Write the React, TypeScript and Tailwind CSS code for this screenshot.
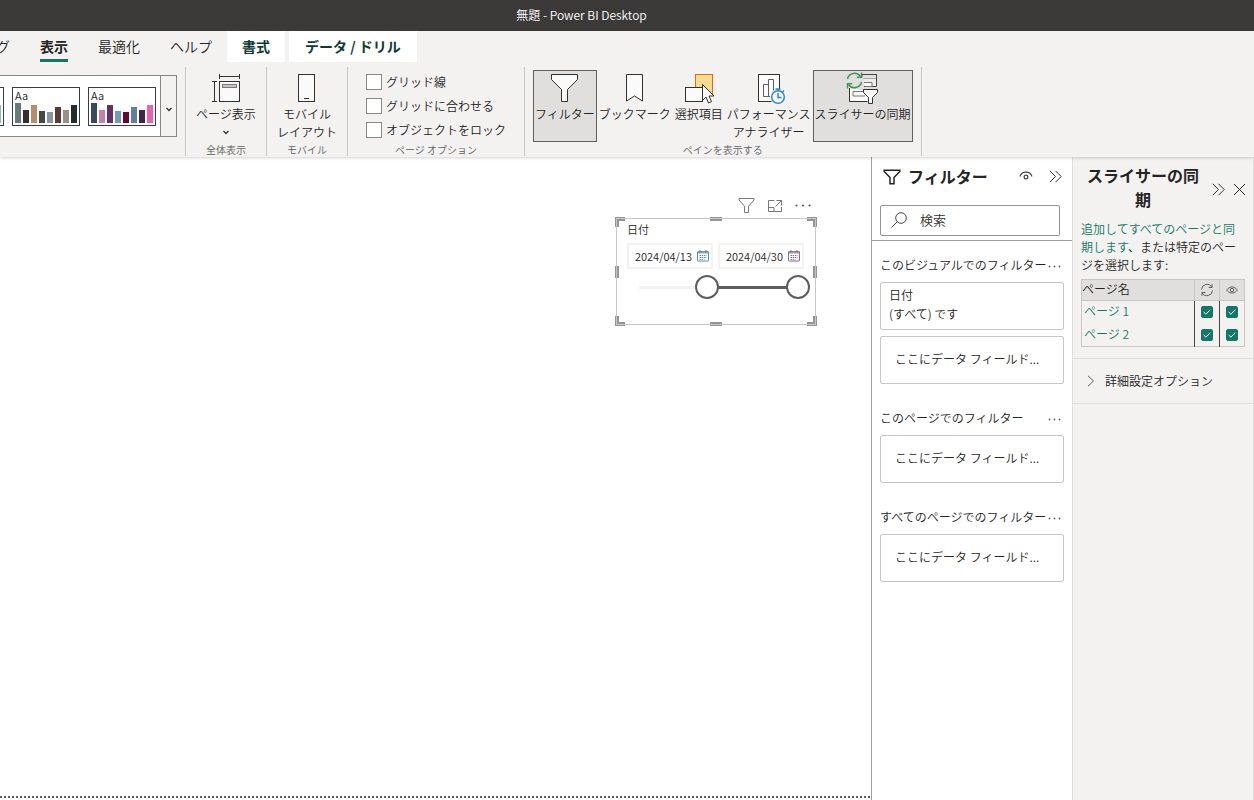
import { useState } from 'react';
import type { ReactNode } from 'react';

interface ThemeBar {
    height: number;
    color: string;
}

const themes: { name: string; bars: ThemeBar[] }[] = [
    {
        name: 'theme-1',
        bars: [20, 13, 18, 12, 11, 16, 13, 18].map(height => ({ height, color: '#86c098' })),
    },
    {
        name: 'theme-2',
        bars: [
            { height: 20, color: '#687b7b' },
            { height: 13, color: '#3a2e30' },
            { height: 18, color: '#b38f70' },
            { height: 12, color: '#434b49' },
            { height: 11, color: '#86979b' },
            { height: 16, color: '#5a3b36' },
            { height: 13, color: '#97928c' },
            { height: 18, color: '#262c2d' },
        ],
    },
    {
        name: 'theme-3',
        bars: [
            { height: 20, color: '#3a4a5b' },
            { height: 13, color: '#c381ab' },
            { height: 18, color: '#663067' },
            { height: 12, color: '#709bbd' },
            { height: 11, color: '#690534' },
            { height: 16, color: '#5f80a0' },
            { height: 13, color: '#41254a' },
            { height: 18, color: '#ee5fac' },
        ],
    },
];

const filterSections = [
    { title: 'このビジュアルでのフィルター', fields: [{ name: '日付', condition: '(すべて) です' }] },
    { title: 'このページでのフィルター', fields: [] },
    { title: 'すべてのページでのフィルター', fields: [] },
];

/* Icons */

function PageViewIcon() {
    return (
        <svg width="30" height="30" viewBox="0 0 30 30" fill="none" stroke="#323130">
            <path d="M8.500 1v5M28.500 1v5M8.500 3.500h20M1 8.500h5M1 28.500h5M3.500 8.500v20" />
            <rect x="8.500" y="8.500" width="20" height="20" fill="#fafafa" />
            <rect x="11.500" y="11.500" width="14" height="3" fill="#c8c6c4" stroke="#797775" />
        </svg>
    );
}

function PhoneIcon() {
    return (
        <svg width="18" height="30" viewBox="0 0 18 30" fill="#fafafa" stroke="#323130">
            <rect x=".5" y="1.500" width="16" height="27" />
            <path d="M6 25.500h5" />
        </svg>
    );
}

function RibbonFunnelIcon() {
    return (
        <svg width="30" height="30" viewBox="0 0 30 30" fill="#fafafa" stroke="#323130">
            <path d="M1.500 1.500h26v5l-10 10v12h-6v-12l-10-10z" />
        </svg>
    );
}

function BookmarkIcon() {
    return (
        <svg width="18" height="30" viewBox="0 0 18 30" fill="#fafafa" stroke="#323130">
            <path d="M.5 1.500h16v26.500l-8-5-8 5z" />
        </svg>
    );
}

function SelectionIcon() {
    return (
        <svg width="30" height="32" viewBox="0 0 30 32" fill="#fafafa">
            <rect x="11.500" y="2.500" width="17" height="19" fill="#f8db8f" stroke="#dc6a13" />
            <rect x="1.500" y="15.500" width="17" height="14" stroke="#323130" />
            <path d="M18.500 12.500v16l3.500-3.500 2.500 6 3-1.300-2.500-5.700h5z" stroke="#323130" />
        </svg>
    );
}

function PerformanceIcon() {
    return (
        <svg width="34" height="34" viewBox="0 0 34 34" fill="none">
            <rect x="6.500" y="3.500" width="21" height="27" fill="#fafafa" stroke="#323130" />
            <path d="M11.500 25.500v-12h5v12zM16.500 25.500v-17h5v17z" stroke="#605e5c" />
            <circle cx="26" cy="26" r="8" fill="#f3f2f1" />
            <circle cx="26" cy="26" r="6.300" fill="#fafafa" stroke="#2b88d8" strokeWidth="1.500" />
            <path d="M26 22v4.500h3.500M26 19.500v-2M23.500 18h5M30.500 21l1.500-1.500" stroke="#2b88d8" strokeWidth="1.500" />
        </svg>
    );
}

function SlicerSyncIcon() {
    return (
        <svg width="34" height="34" viewBox="0 0 34 34" fill="none">
            <rect x="16.500" y="3.500" width="14" height="4" fill="#c8c6c4" stroke="#605e5c" />
            <path d="M16 3.500h14.500v12H18" fill="#fafafa" fillOpacity=".5" stroke="#484644" />
            <path d="M18 11.500h8v4h-7" fill="#fafafa" stroke="#797775" />
            <path d="M3.500 17.500v13h21v-11h-4" fill="#fafafa" />
            <path d="M3.500 17v13.500h18" stroke="#323130" />
            <path d="M19 20.500h-12v4.500h12" stroke="#797775" />
            <path d="M17.500 18.500h14v3l-5 5v6h-4v-6l-5-5z" fill="#fafafa" stroke="#323130" />
            <circle cx="8.500" cy="9.500" r="9" fill="#e1dfdd" />
            <path d="M1.500 8a7.200 7.200 0 0 1 13-2.500M15.500 11a7.200 7.200 0 0 1-13 2.500" stroke="#3a9650" strokeWidth="1.400" />
            <path d="M15.500 1.500v4.700h-4.700M1.500 17.500v-4.700h4.700" stroke="#3a9650" strokeWidth="1.400" />
        </svg>
    );
}

function ChevronDown() {
    return (
        <svg width="8" height="5" viewBox="0 0 8 5" fill="none" stroke="#323130" strokeWidth="1.300">
            <path d="M1.500 1l2.500 2.500 2.500-2.500" />
        </svg>
    );
}

function DoubleChevron() {
    return (
        <svg width="13" height="13" viewBox="0 0 13 13" fill="none" stroke="#323130">
            <path d="M.8.8l5.700 5.700-5.700 5.700M6.500.8l5.700 5.700-5.700 5.700" />
        </svg>
    );
}

function CalendarIcon({ color }: { color: string }) {
    return (
        <svg width="12" height="12" viewBox="0 0 12 12" fill="none">
            <rect x=".5" y="1.500" width="11" height="9.500" rx=".5" fill="#fff" stroke={color} />
            <path d="M1 2.500h10" stroke="#a19f9d" strokeWidth="2" />
            <path d="M3 0v2.500M9 0v2.500" stroke="#797775" />
            <path d="M2.500 5.500h7M2.500 7.500h7M2.500 9.300h5" stroke={color} strokeDasharray="1.500 .7" />
        </svg>
    );
}

/* Ribbon */

function RibbonButton({ icon, lines, active = false, chevron = false }: {
    icon: ReactNode;
    lines: string[];
    active?: boolean;
    chevron?: boolean;
}) {
    return (
        <button
            type="button"
            className={`flex h-[72px] shrink-0 flex-col items-center border px-px text-xs leading-[18px] whitespace-nowrap ${
                active ? 'border-[#605e5c] bg-[#e1dfdd]' : 'border-transparent hover:bg-[#e1dfdd]'
            }`}
        >
            <span className="flex h-[34px] shrink-0 items-center">{icon}</span>
            {lines.map(line => <span key={line}>{line}</span>)}
            {chevron && <span className="flex h-[18px] items-center"><ChevronDown /></span>}
        </button>
    );
}

function RibbonGroup({ label, className, children }: { label: string; className: string; children: ReactNode }) {
    return (
        <div className={`mt-[5px] flex h-[89px] shrink-0 flex-col items-center border-r border-[#c8c6c4] pt-[3px] ${className}`}>
            <div className="flex h-[72px] shrink-0">{children}</div>
            <div className="text-[10px] leading-4 text-[#605e5c]">{label}</div>
        </div>
    );
}

function ThemeGallery() {
    return (
        <div className="mt-[5px] flex h-[89px] w-[186px] shrink-0 justify-end overflow-hidden border-r border-[#c8c6c4] pt-2 pr-2">
            <div className="flex h-[62px] shrink-0 border border-[#8a8886] bg-white">
                <div className="flex items-center gap-2 pr-1 pl-2">
                    {themes.map(theme => (
                        <button
                            key={theme.name}
                            type="button"
                            aria-label={theme.name}
                            className="flex h-[39px] w-[68px] flex-col justify-between border border-[#3b3a45] bg-white px-0.5 pb-[3px] text-left"
                        >
                            <span className="text-[11px] leading-[15px]">Aa</span>
                            <span className="flex items-end gap-0.5">
                                {theme.bars.map((bar, i) => (
                                    <span key={i} className="w-1.5" style={{ height: bar.height, background: bar.color }} />
                                ))}
                            </span>
                        </button>
                    ))}
                </div>
                <button type="button" aria-label="▾" className="flex w-4 items-center justify-center border-l border-[#8a8886] bg-[#f3f2f1] pt-1.5">
                    <ChevronDown />
                </button>
            </div>
        </div>
    );
}

function PageOption({ label }: { label: string }) {
    return (
        <label className="flex h-4 items-center gap-1 text-xs">
            <input type="checkbox" className="size-4 appearance-none border border-[#8a8886] bg-white checked:bg-[#117865]" />
            {label}
        </label>
    );
}

function Ribbon() {
    const tab = 'h-[31px] shrink-0 px-[15px] pb-0.5 text-sm whitespace-nowrap';
    return (
        <header className="relative z-10 bg-[#f3f2f1] shadow-[0_1px_3px_rgba(0,0,0,0.18)]">
            <nav className="flex h-[31px] overflow-hidden">
                <button type="button" className="-ml-1 shrink-0 pr-[15px] pb-0.5 text-sm">グ</button>
                <button type="button" className="flex h-[31px] shrink-0 items-stretch px-[15px] text-sm font-bold">
                    <span className="flex items-center border-b-3 border-[#117865] pt-px">表示</span>
                </button>
                <button type="button" className={tab}>最適化</button>
                <button type="button" className={tab}>ヘルプ</button>
                <button type="button" className={`${tab} bg-white font-bold text-[#0c3b33]`}>書式</button>
                <button type="button" className="ml-1 h-[31px] shrink-0 bg-white px-4 pb-0.5 text-sm font-bold whitespace-nowrap text-[#0c3b33]">
                    データ / ドリル
                </button>
            </nav>
            <div className="flex h-[95px] overflow-hidden">
                <ThemeGallery />
                <RibbonGroup label="全体表示" className="w-[81px]">
                    <RibbonButton icon={<PageViewIcon />} lines={['ページ表示']} chevron />
                </RibbonGroup>
                <RibbonGroup label="モバイル" className="w-[81px]">
                    <RibbonButton icon={<PhoneIcon />} lines={['モバイル', 'レイアウト']} />
                </RibbonGroup>
                <RibbonGroup label="ページ オプション" className="w-[177px]">
                    <div className="flex flex-col gap-2 pt-1">
                        <PageOption label="グリッド線" />
                        <PageOption label="グリッドに合わせる" />
                        <PageOption label="オブジェクトをロック" />
                    </div>
                </RibbonGroup>
                <RibbonGroup label="ペインを表示する" className="px-2">
                    <RibbonButton icon={<RibbonFunnelIcon />} lines={['フィルター']} active />
                    <RibbonButton icon={<BookmarkIcon />} lines={['ブックマーク']} />
                    <RibbonButton icon={<SelectionIcon />} lines={['選択項目']} />
                    <RibbonButton icon={<PerformanceIcon />} lines={['パフォーマンス', 'アナライザー']} />
                    <RibbonButton icon={<SlicerSyncIcon />} lines={['スライサーの同期']} active />
                </RibbonGroup>
            </div>
        </header>
    );
}

/* Report canvas */

function DateField({ value, onChange, label, color }: {
    value: string;
    onChange: (value: string) => void;
    label: string;
    color: string;
}) {
    return (
        <div className="flex h-[26px] w-[86px] items-center border-2 border-[#f3f2f1] bg-white pl-1.5">
            <input
                type="text"
                aria-label={label}
                value={value}
                onChange={e => onChange(e.target.value)}
                className="w-[62px] shrink-0 bg-transparent text-[11px] outline-none"
            />
            <CalendarIcon color={color} />
        </div>
    );
}

const thumb =
    'pointer-events-none absolute inset-0 h-6 w-full appearance-none bg-transparent [&::-webkit-slider-thumb]:pointer-events-auto [&::-webkit-slider-thumb]:size-6 [&::-webkit-slider-thumb]:appearance-none [&::-webkit-slider-thumb]:rounded-full [&::-webkit-slider-thumb]:border-2 [&::-webkit-slider-thumb]:border-[#605e5c] [&::-webkit-slider-thumb]:bg-white';

const handles = [
    '-top-px -left-px size-2.5 border-t-4 border-l-4',
    '-top-px -right-px size-2.5 border-t-4 border-r-4',
    '-bottom-px -left-px size-2.5 border-b-4 border-l-4',
    '-right-px -bottom-px size-2.5 border-r-4 border-b-4',
    '-top-px left-[94px] h-1 w-3 bg-[#979593]',
    '-bottom-px left-[94px] h-1 w-3 bg-[#979593]',
    'top-12 -left-px h-3 w-1 bg-[#979593]',
    'top-12 -right-px h-3 w-1 bg-[#979593]',
];

function DateSlicer() {
    const [start, setStart] = useState('2024/04/13');
    const [end, setEnd] = useState('2024/04/30');
    const [range, setRange] = useState([43, 100]);

    return (
        <section className="absolute top-10 right-[55px] w-[200px]">
            <div className="flex h-[21px] items-start justify-end gap-3 pr-[5px]">
                <button type="button" aria-label="フィルター">
                    <svg width="17" height="17" viewBox="0 0 17 17" fill="none" stroke="#797775">
                        <path d="M1 1.500h15v1.500l-5.500 6.200v6.300h-4v-6.300l-5.500-6.200z" />
                    </svg>
                </button>
                <button type="button" aria-label="フォーカス モード">
                    <svg width="16" height="17" viewBox="0 0 16 17" fill="none" stroke="#797775">
                        <path d="M7.500 3.500h-6v11h13v-4.500M1.500 10.500h5.500v4M9.500 3.500h5v5M14.500 3.500l-6 6" />
                    </svg>
                </button>
                <button type="button" aria-label="その他" className="flex h-[17px] items-center">
                    <svg width="16" height="3" viewBox="0 0 16 3" fill="#605e5c">
                        <circle cx="1.500" cy="1.500" r="1.100" />
                        <circle cx="8" cy="1.500" r="1.100" />
                        <circle cx="14.500" cy="1.500" r="1.100" />
                    </svg>
                </button>
            </div>
            <div className="relative h-[107px] bg-white px-[11px] pt-px">
                {handles.map(position => (
                    <span key={position} className={`absolute border-[#979593] ${position}`} />
                ))}
                <div className="pointer-events-none absolute inset-0 border border-[#c8c6c4]" />
                <div className="pt-px text-[11px] leading-[18px]">日付</div>
                <div className="mt-[5px] flex gap-[5px]">
                    <DateField label="開始日" value={start} onChange={setStart} color="#4a90c8" />
                    <DateField label="終了日" value={end} onChange={setEnd} color="#8a6a86" />
                </div>
                <div className="relative mt-1.5 h-6 w-[183px]">
                    <div className="absolute top-[11px] right-3 left-3 h-[3px] bg-[#f3f2f1]" />
                    <div
                        className="absolute top-[11px] h-[3px] bg-[#605e5c]"
                        style={{ left: 12 + range[0] * 1.59, right: 12 + (100 - range[1]) * 1.59 }}
                    />
                    <input
                        type="range"
                        aria-label="開始"
                        className={thumb}
                        value={range[0]}
                        onChange={e => setRange([Math.min(+e.target.value, range[1]), range[1]])}
                    />
                    <input
                        type="range"
                        aria-label="終了"
                        className={thumb}
                        value={range[1]}
                        onChange={e => setRange([range[0], Math.max(+e.target.value, range[0])])}
                    />
                </div>
            </div>
        </section>
    );
}

/* Filter pane */

function FilterPane() {
    return (
        <aside className="w-[201px] shrink-0 border-l border-[#a19f9d] bg-white">
            <div className="flex h-[38px] items-center pr-2.5 pl-[11px]">
                <svg width="18" height="18" viewBox="0 0 18 18" fill="none" stroke="#252423" strokeWidth="1.500">
                    <path d="M1.200 3.200h15.600v1.300l-5.800 6v6.300h-4v-6.300l-5.800-6z" />
                </svg>
                <h2 className="ml-[7px] flex-1 text-base leading-6 font-bold">フィルター</h2>
                <button type="button" aria-label="表示" className="mr-4">
                    <svg width="14" height="10" viewBox="0 0 14 10" fill="none" stroke="#484644" strokeWidth="1.200">
                        <path d="M1 5.500c.8-2.700 3.200-4.300 6-4.300s5.200 1.600 6 4.300" />
                        <circle cx="7" cy="6" r="1.900" />
                    </svg>
                </button>
                <button type="button" aria-label="折りたたむ"><DoubleChevron /></button>
            </div>
            <div className="border-b border-[#a19f9d] pt-2.5 pr-3 pb-1 pl-2">
                <label className="flex h-[31px] items-center rounded-xs border border-[#979593] pb-0.5 pl-2.5">
                    <svg width="16" height="16" viewBox="0 0 16 16" fill="none" stroke="#484644">
                        <circle cx="10" cy="6" r="5.300" />
                        <path d="M6.200 9.800l-5.700 5.700" />
                    </svg>
                    <input
                        type="search"
                        placeholder="検索"
                        className="ml-[13px] w-28 bg-transparent text-[13px] outline-none placeholder:text-[#323130]"
                    />
                </label>
            </div>
            <div className="flex flex-col gap-[25px] px-2 pt-[15px]">
                {filterSections.map(section => (
                    <section key={section.title}>
                        <div className="mb-2 flex h-[18px] items-center justify-between pr-[3px] text-xs whitespace-nowrap">
                            <h3 className="font-[350]">{section.title}</h3>
                            <button type="button" aria-label="その他">
                                <svg width="13" height="6" viewBox="0 0 13 6" fill="#605e5c">
                                    <circle cx="1.500" cy="4.500" r=".9" />
                                    <circle cx="6.500" cy="4.500" r=".9" />
                                    <circle cx="11.500" cy="4.500" r=".9" />
                                </svg>
                            </button>
                        </div>
                        <div className="flex flex-col gap-1.5">
                            {section.fields.map(field => (
                                <div key={field.name} className="h-12 rounded-xs border border-[#c8c6c4] px-2 pt-0.5 text-xs leading-[19px]">
                                    <div>{field.name}</div>
                                    <div>{field.condition}</div>
                                </div>
                            ))}
                            <div className="flex h-12 items-center rounded-xs border border-[#c8c6c4] px-3.5 pb-0.5 text-xs whitespace-nowrap">
                                ここにデータ フィールド...
                            </div>
                        </div>
                    </section>
                ))}
            </div>
        </aside>
    );
}

/* Slicer sync pane */

function GreenCheckbox({ label }: { label: string }) {
    return (
        <label className="mx-auto grid size-3 place-items-center">
            <input
                type="checkbox"
                defaultChecked
                aria-label={label}
                className="peer col-start-1 row-start-1 size-3 appearance-none rounded-xs border border-[#117865] bg-white checked:bg-[#117865]"
            />
            <svg width="8" height="6" viewBox="0 0 8 6" fill="none" stroke="#fff" className="pointer-events-none invisible col-start-1 row-start-1 peer-checked:visible">
                <path d="M.7 3l2.200 2.200 4.400-4.400" />
            </svg>
        </label>
    );
}

function SlicerSyncPane() {
    return (
        <aside className="w-[182px] shrink-0 border-x border-[#e1dfdd] bg-[#f3f2f1]">
            <div className="flex items-center pt-1.5 pr-[7px] pl-2.5">
                <h2 className="flex-1 text-center text-base leading-6 font-bold">スライサーの同期</h2>
                <button type="button" aria-label="折りたたむ" className="mr-2 ml-[9px] pt-1"><DoubleChevron /></button>
                <button type="button" aria-label="閉じる" className="pt-1">
                    <svg width="13" height="13" viewBox="0 0 13 13" fill="none" stroke="#252423">
                        <path d="M1 1l11 11M12 1l-11 11" />
                    </svg>
                </button>
            </div>
            <div className="border-b border-[#e1dfdd] px-2 pt-[9px] pb-[11px]">
                <p className="text-xs leading-[18px]">
                    <a href="#sync" className="text-[#117865]">追加してすべてのページと同期します</a>、または特定のページを選択します:
                </p>
                <table className="mt-[5px] w-full table-fixed border-collapse border border-[#c8c6c4] text-xs">
                    <thead className="bg-[#e1dfdd]">
                        <tr className="h-[21px] border-b border-[#c8c6c4]">
                            <th className="pb-0.5 text-left leading-[18px] font-[350]">ページ名</th>
                            <th className="w-[25px] border-l border-[#c8c6c4]">
                                <svg width="14" height="14" viewBox="0 0 14 14" fill="none" stroke="#605e5c" className="mx-auto" aria-label="同期">
                                    <path d="M1.500 6.500a5.500 5.500 0 0 1 10.300-2.300M12.500 7.500a5.500 5.500 0 0 1-10.300 2.300M12 1.200v3.300h-3.300M2 12.800v-3.300h3.300" />
                                </svg>
                            </th>
                            <th className="w-[25px] border-l border-[#c8c6c4]">
                                <svg width="12" height="8" viewBox="0 0 12 8" fill="none" stroke="#605e5c" className="mx-auto" aria-label="表示">
                                    <path d="M.7 4c2.600-4 8-4 10.600 0-2.600 4-8 4-10.600 0z" />
                                    <circle cx="6" cy="4" r="1.700" />
                                </svg>
                            </th>
                        </tr>
                    </thead>
                    <tbody>
                        {['ページ 1', 'ページ 2'].map(page => (
                            <tr key={page} className="h-[23px]">
                                <td className="pb-0.5 pl-0.5 leading-[18px] text-[#117865]">{page}</td>
                                <td className="border-l border-[#484644]"><GreenCheckbox label={`${page} 同期`} /></td>
                                <td className="border-l border-[#484644]"><GreenCheckbox label={`${page} 表示`} /></td>
                            </tr>
                        ))}
                    </tbody>
                </table>
            </div>
            <button type="button" className="flex h-[45px] w-full items-center gap-[9px] border-b border-[#e1dfdd] pl-[13px] text-xs">
                <svg width="10" height="12" viewBox="0 0 10 12" fill="none" stroke="#605e5c">
                    <path d="M2 .8l5.500 5.200-5.500 5.200" />
                </svg>
                詳細設定オプション
            </button>
        </aside>
    );
}

export default function App() {
    return (
        <div className="flex min-h-screen flex-col bg-white font-['Noto_Sans_CJK_JP',sans-serif] font-[350] text-[#252423]">
            <div className="flex h-[31px] shrink-0 items-center justify-center bg-[#3b3a39] pr-[91px] pb-0.5 text-xs text-white">
                無題 - Power BI Desktop
            </div>
            <Ribbon />
            <div className="flex flex-1">
                <main className="relative flex flex-1 flex-col justify-end pb-0.5">
                    <DateSlicer />
                    <div className="h-0.5 bg-[repeating-linear-gradient(90deg,#605e5c_0_2px,transparent_2px_4px)]" />
                </main>
                <FilterPane />
                <SlicerSyncPane />
            </div>
        </div>
    );
}
